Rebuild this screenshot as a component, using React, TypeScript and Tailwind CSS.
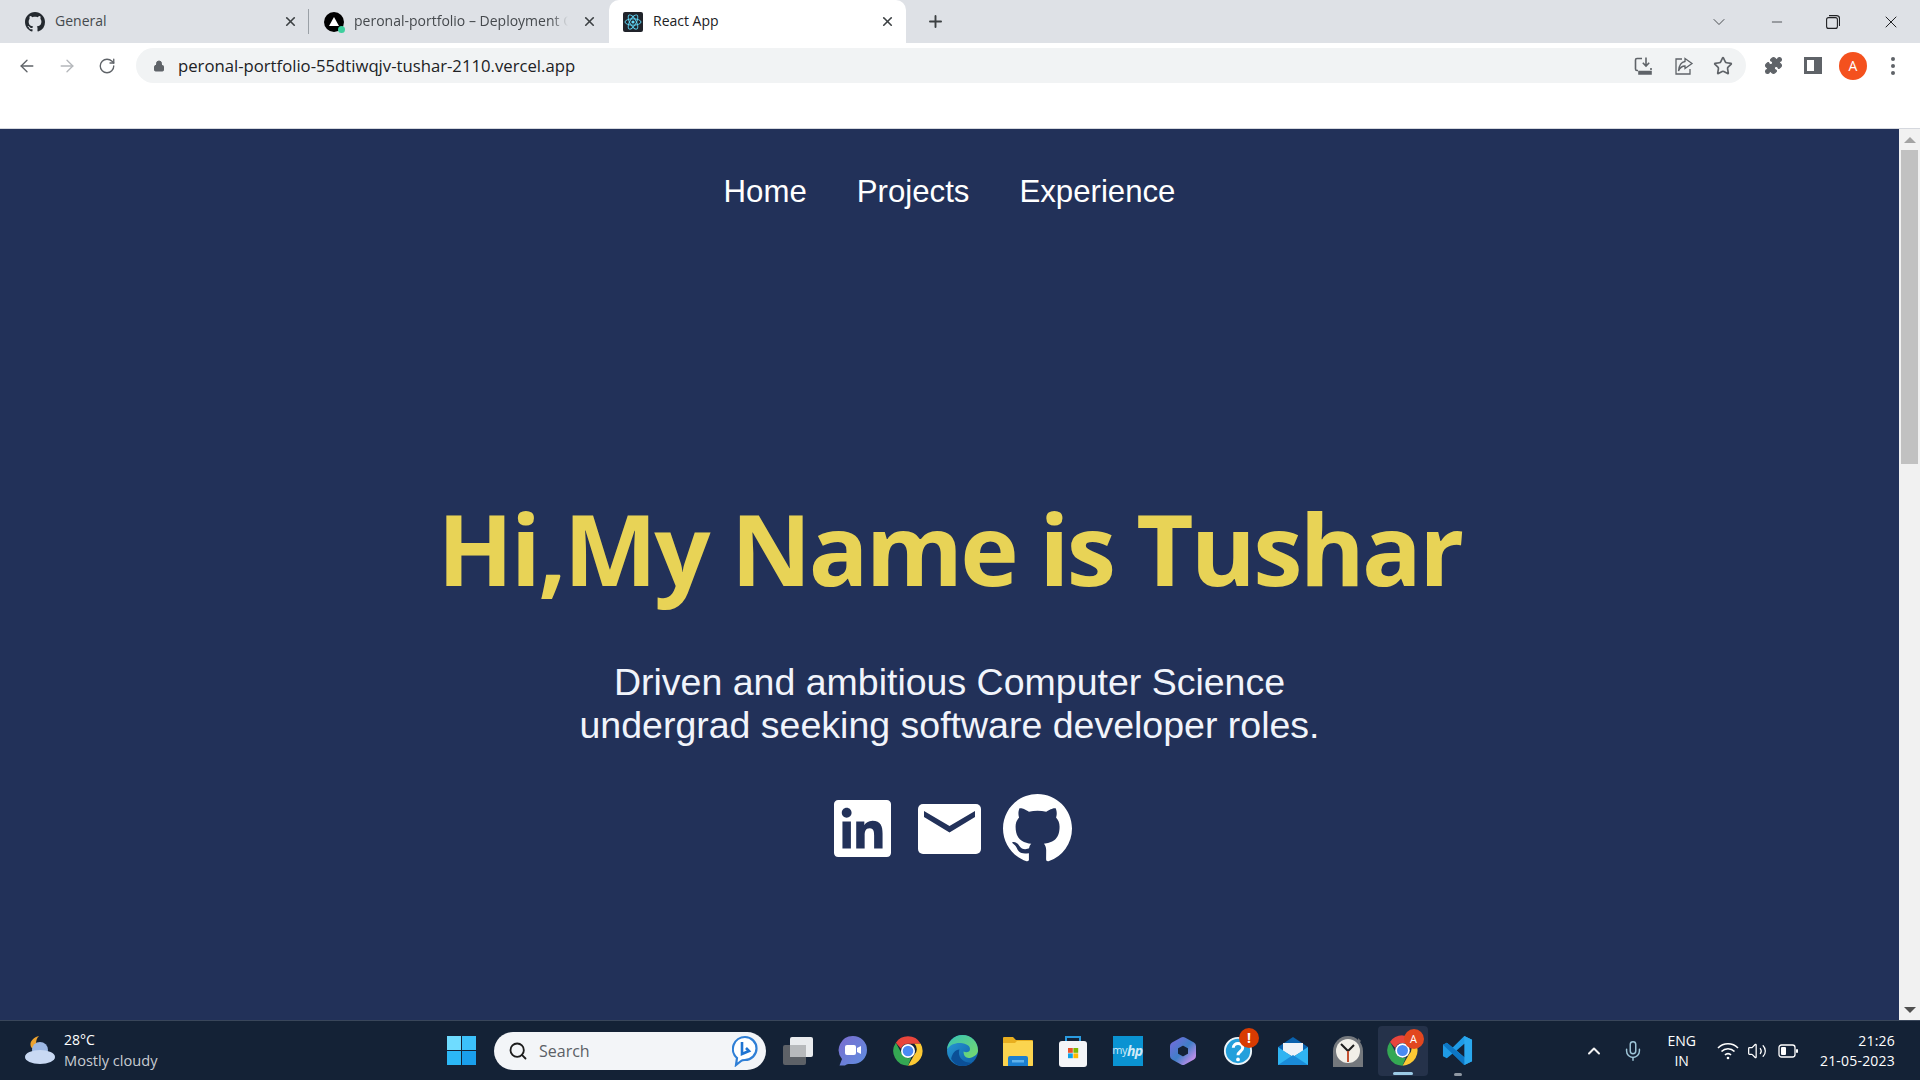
import React from "react";
import { ArrowLeft, ArrowRight, RotateCw, Lock, Star, Puzzle, X, Plus, ChevronDown, Minus, Search, ChevronUp, Mic, Volume2 } from "lucide-react";

const GH = "M8 0C3.58 0 0 3.58 0 8c0 3.54 2.29 6.53 5.47 7.59.4.07.55-.17.55-.38 0-.19-.01-.82-.01-1.49-2.01.37-2.53-.49-2.69-.94-.09-.23-.48-.94-.82-1.13-.28-.15-.68-.52-.01-.53.63-.01 1.08.58 1.23.82.72 1.21 1.87.87 2.33.66.07-.52.28-.87.51-1.07-1.78-.2-3.64-.89-3.64-3.95 0-.87.31-1.59.82-2.15-.08-.2-.36-1.02.08-2.12 0 0 .67-.21 2.2.82.64-.18 1.32-.27 2-.27.68 0 1.36.09 2 .27 1.53-1.04 2.2-.82 2.2-.82.44 1.1.16 1.92.08 2.12.51.56.82 1.27.82 2.15 0 3.07-1.87 3.75-3.65 3.95.29.25.54.73.54 1.48 0 1.07-.01 1.93-.01 2.2 0 .21.15.46.55.38A8.013 8.013 0 0016 8c0-4.42-3.58-8-8-8z";
const LI = "M20.447 20.452h-3.554v-5.569c0-1.328-.027-3.037-1.852-3.037-1.853 0-2.136 1.445-2.136 2.939v5.667H9.351V9h3.414v1.561h.046c.477-.9 1.637-1.85 3.37-1.85 3.601 0 4.267 2.37 4.267 5.455v6.286zM5.337 7.433c-1.144 0-2.063-.926-2.063-2.065 0-1.138.92-2.063 2.063-2.063 1.14 0 2.064.925 2.064 2.063 0 1.139-.925 2.065-2.064 2.065zm1.782 13.019H3.555V9h3.564v11.452zM22.225 0H1.771C.792 0 0 .774 0 1.729v20.542C0 23.227.792 24 1.771 24h20.451C23.2 24 24 23.227 24 22.271V1.729C24 .774 23.2 0 22.222 0h.003z";

function ChromeIcon({ size = 30 }: { size?: number }) {
  return (
    <svg width={size} height={size} viewBox="0 0 48 48">
      <path d="M24 2a22 22 0 0 1 19 11H24a11 11 0 0 0-10.500 7.500L5.800 11.500A22 22 0 0 1 24 2z" fill="#e8453c" />
      <path d="M43 13a22 22 0 0 1-19 33l9.500-16.500A11 11 0 0 0 33.500 13z" fill="#fcc934" />
      <path d="M24 46A22 22 0 0 1 5.800 11.500l9 17A11 11 0 0 0 29 33.800z" fill="#34a853" />
      <circle cx="24" cy="24" r="10.500" fill="#fff" />
      <circle cx="24" cy="24" r="8" fill="#4a8af4" />
    </svg>
  );
}

function ReactTabIcon() {
  return (
    <svg width="20" height="20" viewBox="0 0 20 20">
      <rect width="20" height="20" rx="2" fill="#20232a" />
      <g fill="none" stroke="#61dafb" strokeWidth="0.9">
        <ellipse cx="10" cy="10" rx="8" ry="3.2" />
        <ellipse cx="10" cy="10" rx="8" ry="3.2" transform="rotate(60 10 10)" />
        <ellipse cx="10" cy="10" rx="8" ry="3.2" transform="rotate(120 10 10)" />
      </g>
      <circle cx="10" cy="10" r="1.6" fill="#61dafb" />
    </svg>
  );
}

function VercelTabIcon() {
  return (
    <span className="relative block w-[20px] h-[20px] rounded-full bg-black">
      <svg width="20" height="20" viewBox="0 0 20 20"><path d="M10 5l5 9H5z" fill="#fff" /></svg>
      <span className="absolute right-[-1px] bottom-[-1px] w-[7px] h-[7px] rounded-full bg-[#3ecf9e]" />
    </span>
  );
}

function TabClose() {
  return <X size={15} strokeWidth={2.6} className="text-[#3c4043] shrink-0" />;
}

function TabStrip() {
  return (
    <div className="flex h-[43px] bg-[#dee1e6] text-[14px] text-[#45494d] items-stretch">
      <div className="w-[309px] flex items-center pl-[25px] pr-[11px] relative">
        <svg width="20" height="20" viewBox="0 0 16 16" fill="#24292f"><path d={GH} /></svg>
        <span className="ml-[10px] flex-1 pb-[2px]">General</span>
        <TabClose />
        <span className="absolute right-0 top-[9px] h-[25px] w-px bg-[#9aa0a6]" />
      </div>
      <div className="w-[300px] flex items-center pl-[15px] pr-[12px]">
        <VercelTabIcon />
        <span className="ml-[10px] w-[214px] overflow-hidden whitespace-nowrap mr-[14px] pb-[2px] [mask-image:linear-gradient(to_right,black_92%,transparent)]">peronal-portfolio – Deployment Ov</span>
        <TabClose />
      </div>
      <div className="w-[297px] flex items-center pl-[14px] pr-[11px] bg-white rounded-t-[10px] text-[#202124]">
        <ReactTabIcon />
        <span className="ml-[10px] flex-1 pb-[2px]">React App</span>
        <TabClose />
      </div>
      <Plus size={19} strokeWidth={2.4} className="self-center ml-[20px] text-[#3c4043]" />
      <div className="flex-1" />
      <div className="flex items-center text-[#3c4043]">
        <ChevronDown size={20} strokeWidth={1.1} className="mr-[40px]" />
        <Minus size={16} strokeWidth={1.3} className="mr-[41px]" />
        <svg width="14" height="14" viewBox="0 0 14 14" fill="none" stroke="#202124" strokeWidth="1.1" className="mr-[41px]">
          <rect x="0.6" y="2.6" width="10.8" height="10.8" rx="2" />
          <path d="M3 .6h7.5a3 3 0 0 1 3 3V11" />
        </svg>
        <X size={20} strokeWidth={1.2} className="mr-[19px] text-[#202124]" />
      </div>
    </div>
  );
}

function Toolbar() {
  return (
    <div className="h-[86px] bg-white flex items-start pt-[5px] border-b border-[#d5d8de] text-[#5f6368]">
      <div className="h-[35px] flex items-center pl-[17px]">
        <ArrowLeft size={20} strokeWidth={1.6} />
        <ArrowRight size={20} strokeWidth={1.6} className="ml-[20px] text-[#b4b7bb]" />
        <RotateCw size={18} strokeWidth={1.8} className="ml-[21px]" />
      </div>
      <div className="h-[35px] w-[1610px] ml-[20px] rounded-full bg-[#f1f3f4] flex items-center pl-[17px] pr-[13px]">
        <Lock size={12} fill="#5f6368" strokeWidth={2} />
        <span className="ml-[13px] text-[16.7px] text-[#202124] flex-1">peronal-portfolio-55dtiwqjv-tushar-2110.vercel.app</span>
        <svg width="20" height="20" viewBox="0 0 20 20" fill="none" stroke="#5f6368" strokeWidth="1.6" className="mr-[20px]">
          <path d="M8 2.500H3a1.500 1.500 0 0 0-1.500 1.500v9A1.500 1.500 0 0 0 3 14.500h1" />
          <path d="M12 1.500v8M8.800 6.800l3.200 3.200 3.200-3.200M17 12v2" />
          <path d="M5 15.500h12v2.500H5z" fill="#5f6368" />
        </svg>
        <svg width="20" height="20" viewBox="0 0 20 20" fill="none" stroke="#5f6368" strokeWidth="1.300" className="mr-[19px]">
          <path d="M8 3H2v15h14v-5" />
          <path d="M11 2.500l7 5-7 5V10C8 10 6 11.500 4.500 15 5 10 7 6 11 5.500z" />
        </svg>
        <Star size={20} strokeWidth={2} />
      </div>
      <div className="h-[35px] flex items-center ml-[18px]">
        <Puzzle size={19} fill="#5f6368" strokeWidth={1.500} />
        <span className="ml-[21px] w-[18px] h-[17px] border-[3px] border-r-[8px] border-[#5f6368] bg-white block" />
        <span className="ml-[17px] w-[28px] h-[28px] rounded-full bg-[#f4511e] text-white text-[14px] flex items-center justify-center">A</span>
        <span className="ml-[24px] flex flex-col gap-[3px]">
          <span className="block w-[4px] h-[4px] rounded-full bg-[#5f6368]" />
          <span className="block w-[4px] h-[4px] rounded-full bg-[#5f6368]" />
          <span className="block w-[4px] h-[4px] rounded-full bg-[#5f6368]" />
        </span>
      </div>
    </div>
  );
}

function Scrollbar() {
  return (
    <div className="w-[21px] bg-[#f1f1f1] flex flex-col items-center">
      <div className="h-[21px] flex items-center"><span className="block w-0 h-0 border-x-[6px] border-x-transparent border-b-[6px] border-b-[#a3a3a3]" /></div>
      <div className="w-[17px] h-[314px] bg-[#c1c1c1]" />
      <div className="flex-1" />
      <div className="h-[21px] flex items-center"><span className="block w-0 h-0 border-x-[6px] border-x-transparent border-t-[6px] border-t-[#505050]" /></div>
    </div>
  );
}

function Hero() {
  return (
    <div className="flex-1 bg-[#223159] flex flex-col items-center">
      <nav className="flex gap-[50px] mt-[45px] text-[31.2px] leading-[36px] text-white font-['Liberation_Sans',sans-serif]">
        <span>Home</span>
        <span>Projects</span>
        <span>Experience</span>
      </nav>
      <h1 className="mt-[270px] text-[99px] leading-[136px] tracking-[-2.7px] font-bold text-[#e8d356] font-['Open_Sans',sans-serif] whitespace-nowrap">Hi,My Name is Tushar</h1>
      <p className="mt-[45px] text-[37.5px] leading-[43px] text-[#f1f4fb] text-center font-['Liberation_Sans',sans-serif]">
        Driven and ambitious Computer Science<br />undergrad seeking software developer roles.
      </p>
      <div className="mt-[47px] ml-[7px] flex items-center">
        <svg width="57" height="57" viewBox="0 0 24 24" fill="#fff"><path d={LI} /></svg>
        <svg width="63" height="50" viewBox="0 0 63 50" className="ml-[27px]">
          <rect width="63" height="50" rx="5" fill="#fff" />
          <path d="M6 7v6l25.500 15.500L57 13V7L31.500 22z" fill="#223159" />
        </svg>
        <svg width="69" height="69" viewBox="0 0 16 16" fill="#fff" className="ml-[22px]"><path d={GH} /></svg>
      </div>
    </div>
  );
}

function Slot({ children, className = "" }: { children: React.ReactNode; className?: string }) {
  return <div className={`relative w-[55px] h-[50px] shrink-0 flex items-center justify-center ${className}`}>{children}</div>;
}

function Taskbar() {
  return (
    <div className="h-[60px] bg-[#142236] border-t border-[#39465a] flex items-center text-white font-['Open_Sans',sans-serif]">
      <div className="w-[447px] shrink-0 flex items-center pl-[24px] pb-[2px]">
        <svg width="32" height="30" viewBox="0 0 32 30" className="shrink-0">
          <path d="M15 1a9 9 0 0 0 1 14c-5 1-9-1-9.500-5S10 2 15 1z" fill="#eda32f" />
          <circle cx="16" cy="15" r="8" fill="#9db8e4" />
          <ellipse cx="16" cy="22" rx="15" ry="7" fill="#c9d9f3" />
        </svg>
        <div className="ml-[8px] text-[14.6px] leading-[20px]">
          <div className="text-[14px]">28°C</div>
          <div className="text-[#c8ccd2]">Mostly cloudy</div>
        </div>
      </div>
      <svg width="29" height="29" viewBox="0 0 29 29" className="shrink-0">
        <rect width="14" height="14" fill="#6fdcff" />
        <rect x="15" width="14" height="14" fill="#3cc1fa" />
        <rect y="15" width="14" height="14" fill="#2cb8f6" />
        <rect x="15" y="15" width="14" height="14" fill="#1a9fec" />
      </svg>
      <div className="ml-[18px] w-[272px] h-[38px] rounded-full bg-[#f3f5f8] flex items-center pl-[14px] pr-[8px] text-[#5b5f66] shrink-0">
        <Search size={20} strokeWidth={2.200} className="text-[#1c1c1c]" />
        <span className="ml-[11px] text-[16px] flex-1">Search</span>
        <svg width="26" height="32" viewBox="0 0 26 32">
          <path d="M13 2a11 11 0 0 1 0 23c-1 0-3 0-4 1l-5 4 1-7A12 12 0 0 1 13 2z" fill="#fff" stroke="#2f7fd6" strokeWidth="2.200" />
          <path d="M10 7v12l7-3-3-3" fill="none" stroke="#1e74d2" strokeWidth="2.600" />
        </svg>
      </div>
      <Slot className="ml-[4px]">
        <svg width="31" height="29" viewBox="0 0 31 29">
          <rect x="8" y="1" width="23" height="20" rx="2" fill="#e9ebee" />
          <rect x="1" y="9" width="23" height="20" rx="2" fill="#6a6c70" fillOpacity="0.85" />
          <rect x="8" y="9" width="16" height="12" fill="#b7b9bc" />
        </svg>
      </Slot>
      <Slot>
        <svg width="30" height="32" viewBox="0 0 30 32">
          <defs>
            <linearGradient id="teams" x1="0" y1="0" x2="1" y2="1"><stop offset="0" stopColor="#7a6ccf" /><stop offset="1" stopColor="#5f8fe0" /></linearGradient>
          </defs>
          <path d="M15 1a14 14 0 0 1 0 28c-3 0-6-.500-8 1.500H1.500L4 24A14 14 0 0 1 15 1z" fill="url(#teams)" />
          <rect x="7" y="10" width="11" height="10" rx="2" fill="#fff" />
          <path d="M19 13l4-2v8l-4-2z" fill="#fff" />
        </svg>
      </Slot>
      <Slot><ChromeIcon size={32} /></Slot>
      <Slot>
        <svg width="31" height="31" viewBox="0 0 30 30">
          <defs>
            <linearGradient id="edgeA" x1="0" y1="0" x2="1" y2="1"><stop offset="0" stopColor="#2b9fd8" /><stop offset="1" stopColor="#0c59a4" /></linearGradient>
            <linearGradient id="edgeB" x1="0" y1="0" x2="1" y2="1"><stop offset="0" stopColor="#36c3b4" /><stop offset="1" stopColor="#79d96b" /></linearGradient>
          </defs>
          <circle cx="15" cy="15" r="15" fill="url(#edgeA)" />
          <path d="M30 15C30 6 23 0 15 0 7 0 1 6 0 14c3-5 9-7 15-6 6 1 8 4 7 7-1 2-4 2-6 1 0 5 3 7 7 6 4-1 7-4 7-7z" fill="url(#edgeB)" />
          <path d="M12 14c-2 6 2 13 12 13-3 2-6 3-9 3-5 0-9-3-11-7 1-5 4-9 8-9z" fill="#0b4f96" />
        </svg>
      </Slot>
      <Slot>
        <svg width="30" height="30" viewBox="0 0 30 30">
          <path d="M0 2a1 1 0 0 1 1-1h9l3 3h16a1 1 0 0 1 1 1v24a1 1 0 0 1-1 1H1a1 1 0 0 1-1-1z" fill="#e8ae1f" />
          <path d="M0 7h12l2-2h15a1 1 0 0 1 1 1v23a1 1 0 0 1-1 1H1a1 1 0 0 1-1-1z" fill="#fbd44f" />
          <path d="M5 22a2 2 0 0 1 2-2h16a2 2 0 0 1 2 2v8H5z" fill="#1b7fd0" />
          <rect x="9" y="24" width="12" height="2.500" fill="#5fb2ec" />
        </svg>
      </Slot>
      <Slot>
        <svg width="30" height="32" viewBox="0 0 30 32">
          <path d="M8 8V2h14v6" fill="none" stroke="#2a9be0" strokeWidth="2" />
          <rect x="1" y="6" width="28" height="26" rx="3" fill="#f4f5f7" />
          <rect x="10" y="13" width="4.800" height="4.800" fill="#e8532b" />
          <rect x="15.400" y="13" width="4.800" height="4.800" fill="#7eb900" />
          <rect x="10" y="18.400" width="4.800" height="4.800" fill="#0ea2e8" />
          <rect x="15.400" y="18.400" width="4.800" height="4.800" fill="#ffb900" />
        </svg>
      </Slot>
      <Slot>
        <div className="w-[30px] h-[30px] bg-[#0a93d2] flex items-center justify-center text-[11px] text-[#cfeaf7] font-['Open_Sans',sans-serif] tracking-tighter">my<span className="italic font-bold text-[14px]">hp</span></div>
      </Slot>
      <Slot>
        <svg width="28" height="30" viewBox="0 0 28 30">
          <defs>
            <linearGradient id="cop" x1="0" y1="0" x2="1" y2="1"><stop offset="0" stopColor="#6a6fd8" /><stop offset="0.5" stopColor="#3f7fc8" /><stop offset="1" stopColor="#c08ee8" /></linearGradient>
          </defs>
          <path d="M14 5l9 5v10l-9 5-9-5V10z" fill="none" stroke="url(#cop)" strokeWidth="8" strokeLinejoin="round" />
        </svg>
      </Slot>
      <Slot>
        <svg width="30" height="30" viewBox="0 0 32 32">
          <circle cx="16" cy="16" r="14" fill="#23a0dc" stroke="#eef5f9" strokeWidth="2" />
          <path d="M11 12.500c0-6 10-6 10 0 0 4-5 4-5 8" fill="none" stroke="#fff" strokeWidth="3.200" />
          <circle cx="16" cy="25" r="2" fill="#fff" />
        </svg>
        <span className="absolute right-[6px] top-[2px] w-[20px] h-[20px] rounded-full bg-[#d83b01] text-white text-[14px] font-bold leading-[20px] text-center">!</span>
      </Slot>
      <Slot>
        <svg width="30" height="28" viewBox="0 0 30 28">
          <path d="M0 10L15 0l15 10v6H0z" fill="#0a62ae" />
          <path d="M5 6h20v8l-10 6-10-6z" fill="#eef3f8" />
          <path d="M0 10l15 10 15-10v18H0z" fill="#2fb4f2" />
          <path d="M0 28l15-10 15 10z" fill="#1a8bd8" />
        </svg>
      </Slot>
      <Slot>
        <svg width="30" height="32" viewBox="0 0 30 32">
          <path d="M25 3l3 3-3 3z" fill="#6d7075" />
          <path d="M0 32V16a15 15 0 0 1 30 0v16z" fill="#74787d" />
          <circle cx="15" cy="16" r="12" fill="#f1efe8" />
          <path d="M8 9l7 7 6-6" fill="none" stroke="#1d1d1d" strokeWidth="2" />
          <path d="M15 16v11" stroke="#c2502f" strokeWidth="2" />
        </svg>
      </Slot>
      <div className="relative w-[50px] h-[50px] mx-[2.5px] shrink-0 flex items-center justify-center bg-[#25324a] rounded-[4px]">
        <ChromeIcon size={33} />
        <span className="absolute right-[4px] top-[3px] w-[20px] h-[20px] rounded-full bg-[#e2471f] text-[11px] text-white leading-[20px] text-center">A</span>
        <span className="absolute bottom-[1px] left-[15px] w-[20px] h-[3px] rounded-full bg-[#9ccbe6]" />
      </div>
      <Slot>
        <svg width="31" height="31" viewBox="0 0 32 32">
          <path d="M23 1l8 4v22l-8 4-12-12-6 5-4-2V10l4-2 6 5z" fill="#1f9be6" />
          <path d="M23 1l8 4v22l-8 4z" fill="#2aa8ee" />
          <path d="M23 9l-8 7 8 7z" fill="#142236" />
          <path d="M5 8l18 15v8L1 10z" fill="#0d76c4" />
        </svg>
        <span className="absolute bottom-[0px] left-[24px] w-[8px] h-[3px] rounded-full bg-[#8f98a3]" />
      </Slot>
      <div className="flex-1" />
      <ChevronUp size={20} strokeWidth={2.400} className="mr-[18px] text-[#f2f2f2]" />
      <Mic size={22} strokeWidth={1.600} className="mr-[23px] text-[#9fc6d8]" />
      <div className="text-[14px] leading-[20px] text-center mr-[21px]">
        <div>ENG</div>
        <div>IN</div>
      </div>
      <svg width="22" height="18" viewBox="0 0 22 18" fill="none" stroke="#fff" strokeWidth="1.600" className="mr-[8px]">
        <path d="M1 6a14 14 0 0 1 20 0M4.500 9.500a9 9 0 0 1 13 0M8 13a4 4 0 0 1 6 0" />
        <circle cx="11" cy="16" r="1.300" fill="#fff" stroke="none" />
      </svg>
      <Volume2 size={20} strokeWidth={1.500} className="mr-[11px]" />
      <svg width="20" height="14" viewBox="0 0 20 14" fill="none" className="mr-[22px]">
        <rect x="1" y="1" width="16" height="12" rx="2.500" stroke="#fff" strokeWidth="1.300" />
        <rect x="3" y="3" width="5" height="8" rx="1" fill="#fff" />
        <rect x="18" y="5" width="2" height="4" rx="1" fill="#fff" />
      </svg>
      <div className="text-[14px] leading-[20px] text-right mr-[25px] tracking-[0.2px]">
        <div>21:26</div>
        <div>21-05-2023</div>
      </div>
    </div>
  );
}

export default function App() {
  return (
    <div className="w-[1920px] h-[1080px] flex flex-col overflow-hidden font-['Open_Sans',sans-serif]">
      <TabStrip />
      <Toolbar />
      <div className="flex flex-1 min-h-0">
        <Hero />
        <Scrollbar />
      </div>
      <Taskbar />
    </div>
  );
}
